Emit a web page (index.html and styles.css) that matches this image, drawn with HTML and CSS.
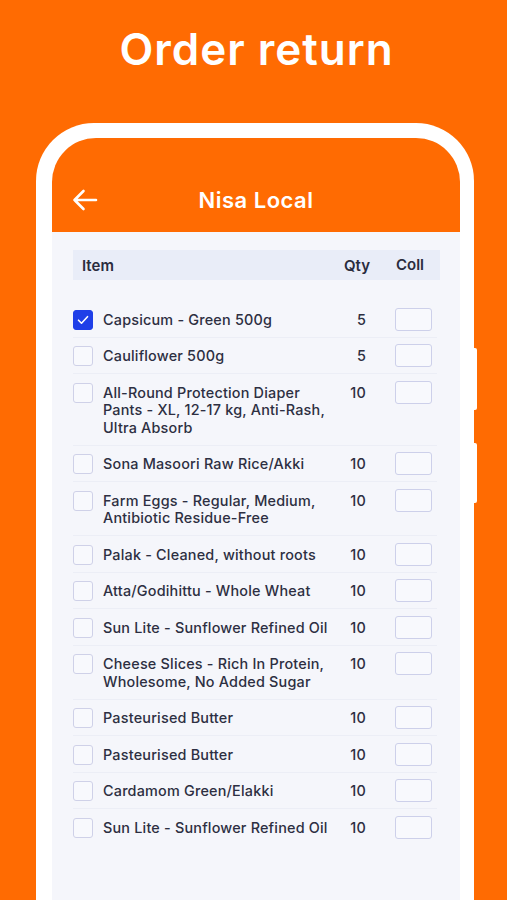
FILE: index.html
```html
<!DOCTYPE html>
<html lang="en">
<head>
<meta charset="utf-8">
<title>Order return</title>
<link rel="stylesheet" href="styles.css">
</head>
<body>
<div class="page">
  <h1 class="title">Order return</h1>
  <div class="phone">
    <span class="side-btn side-btn-1"></span>
    <span class="side-btn side-btn-2"></span>
    <div class="screen">
      <div class="notch"></div>
      <header class="appbar">
        <svg class="back" width="26" height="22" viewBox="0 0 26 22" fill="none" stroke="#fff" stroke-width="2.6" stroke-linecap="round" stroke-linejoin="round">
          <path d="M24 11H2.5M11.5 2L2.5 11l9 9"/>
        </svg>
        <div class="appbar-title">Nisa Local</div>
      </header>
      <main class="content">
        <div class="thead">
          <span class="th-item">Item</span>
          <span class="th-qty">Qty</span>
          <span class="th-coll">Coll</span>
        </div>
        <div class="rows">
          <div class="row">
            <span class="check checked"><svg width="12" height="10" viewBox="0 0 12 10" fill="none" stroke="#fff" stroke-width="1.6" stroke-linecap="round" stroke-linejoin="round"><path d="M1.5 5.2l3 3 6-6.5"/></svg></span>
            <span class="name">Capsicum - Green 500g</span>
            <span class="qty">5</span>
            <span class="coll"></span>
          </div>
          <div class="row">
            <span class="check"></span>
            <span class="name">Cauliflower 500g</span>
            <span class="qty">5</span>
            <span class="coll"></span>
          </div>
          <div class="row">
            <span class="check"></span>
            <span class="name">All-Round Protection Diaper<br>Pants - XL, 12-17 kg, Anti-Rash,<br>Ultra Absorb</span>
            <span class="qty">10</span>
            <span class="coll"></span>
          </div>
          <div class="row">
            <span class="check"></span>
            <span class="name">Sona Masoori Raw Rice/Akki</span>
            <span class="qty">10</span>
            <span class="coll"></span>
          </div>
          <div class="row">
            <span class="check"></span>
            <span class="name">Farm Eggs - Regular, Medium,<br>Antibiotic Residue-Free</span>
            <span class="qty">10</span>
            <span class="coll"></span>
          </div>
          <div class="row">
            <span class="check"></span>
            <span class="name">Palak - Cleaned, without roots</span>
            <span class="qty">10</span>
            <span class="coll"></span>
          </div>
          <div class="row">
            <span class="check"></span>
            <span class="name">Atta/Godihittu - Whole Wheat</span>
            <span class="qty">10</span>
            <span class="coll"></span>
          </div>
          <div class="row">
            <span class="check"></span>
            <span class="name">Sun Lite - Sunflower Refined Oil</span>
            <span class="qty">10</span>
            <span class="coll"></span>
          </div>
          <div class="row">
            <span class="check"></span>
            <span class="name">Cheese Slices - Rich In Protein,<br>Wholesome, No Added Sugar</span>
            <span class="qty">10</span>
            <span class="coll"></span>
          </div>
          <div class="row">
            <span class="check"></span>
            <span class="name">Pasteurised Butter</span>
            <span class="qty">10</span>
            <span class="coll"></span>
          </div>
          <div class="row">
            <span class="check"></span>
            <span class="name">Pasteurised Butter</span>
            <span class="qty">10</span>
            <span class="coll"></span>
          </div>
          <div class="row">
            <span class="check"></span>
            <span class="name">Cardamom Green/Elakki</span>
            <span class="qty">10</span>
            <span class="coll"></span>
          </div>
          <div class="row">
            <span class="check"></span>
            <span class="name">Sun Lite - Sunflower Refined Oil</span>
            <span class="qty">10</span>
            <span class="coll"></span>
          </div>
        </div>
      </main>
    </div>
  </div>
</div>
</body>
</html>
```

FILE: styles.css
```css
* { box-sizing: border-box; }

html, body {
  margin: 0;
  padding: 0;
  height: 900px;
  overflow: hidden;
  background: #ff6b02;
}

body {
  font-family: Inter, "Noto Sans", sans-serif;
  color: #2d2f42;
}

.page {
  display: flex;
  flex-direction: column;
  align-items: flex-start;
}

.title {
  align-self: stretch;
  margin: 24px 0 0;
  padding-left: 6px;
  height: 99px;
  text-align: center;
  font-size: 44px;
  line-height: 50px;
  font-weight: 600;
  letter-spacing: 1px;
  color: #ffffff;
}

.phone {
  position: relative;
  margin-left: 36px;
  width: 438px;
  height: 900px;
  background: #ffffff;
  border-radius: 58px 58px 0 0;
  padding: 15px 14px 0 16px;
}

.side-btn {
  position: absolute;
  right: -3px;
  width: 4px;
  background: #ffffff;
  border-radius: 0 2px 2px 0;
}
.side-btn-1 { top: 225px; height: 62px; }
.side-btn-2 { top: 320px; height: 60px; }

.screen {
  position: relative;
  height: 100%;
  background: #f5f6fb;
  border-radius: 44px 44px 0 0;
  overflow: hidden;
}

.notch {
  position: absolute;
  top: 0;
  left: 91px;
  width: 225px;
  height: 32px;
  background: #ffffff;
  border-radius: 0 0 13px 13px;
}
.notch::before,
.notch::after {
  content: "";
  position: absolute;
  top: 0;
  width: 8px;
  height: 8px;
}
.notch::before {
  left: -8px;
  background: radial-gradient(circle at 0 100%, transparent 7.5px, #ffffff 8px);
}
.notch::after {
  right: -8px;
  background: radial-gradient(circle at 100% 100%, transparent 7.5px, #ffffff 8px);
}

.appbar {
  height: 94px;
  background: #ff6b02;
  display: flex;
  align-items: flex-start;
  padding: 51px 20px 0;
  position: relative;
}

.back {
  display: block;
}

.appbar-title {
  position: absolute;
  left: 0;
  right: 0;
  top: 48px;
  text-align: center;
  font-size: 22px;
  line-height: 28px;
  font-weight: 600;
  letter-spacing: 0.5px;
  color: #ffffff;
  pointer-events: none;
}

.content {
  padding: 18px 20px 0 21px;
}

.thead {
  display: grid;
  grid-template-columns: 1fr 34px 67px;
  align-items: center;
  height: 30px;
  background: #e9edf8;
  padding-left: 9px;
  padding-right: 3px;
  font-size: 15px;
  font-weight: 600;
  color: #2a2c3e;
}
.th-qty { text-align: right; }
.th-coll { text-align: center; padding-left: 13px; margin-top: -2px; }

.rows {
  margin-top: 21px;
  padding-right: 3px;
}

.row {
  display: grid;
  grid-template-columns: 20px minmax(0, 1fr) 30px 61px;
  column-gap: 10px;
  align-items: start;
  padding: 9.5px 0 8.5px;
  border-bottom: 1px solid #eceef6;
  font-size: 14.4px;
  line-height: 17.5px;
  letter-spacing: 0.2px;
  font-weight: 500;
}
.row:last-child { border-bottom: none; }

.check {
  width: 20px;
  height: 20px;
  margin: -1px 0 -2px;
  border: 1.5px solid #cfd1e8;
  border-radius: 3px;
  background: #f8f9fd;
  display: flex;
  align-items: center;
  justify-content: center;
}
.check.checked {
  background: #1f3fe8;
  border-color: #1f3fe8;
}

.name {
  color: #2d2f42;
  white-space: nowrap;
}

.qty {
  text-align: right;
  color: #2d2f42;
}

.coll {
  width: 37px;
  height: 23px;
  margin: -3px 0 -3px 19px;
  border: 1.5px solid #cdd0ea;
  border-radius: 3px;
  background: #f8f9fd;
}
```
